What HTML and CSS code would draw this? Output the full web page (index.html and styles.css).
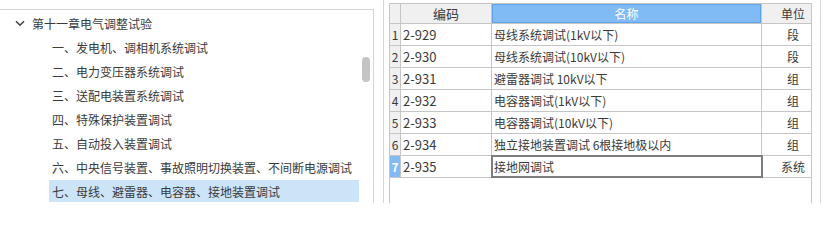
FILE: index.html
```html
<!DOCTYPE html>
<html lang="zh-CN">
<head>
<meta charset="utf-8">
<link rel="stylesheet" href="styles.css">
</head>
<body>
<div class="page">
  <div class="tree-panel">
    <div class="tree">
      <div class="node chapter">
        <svg class="chev" width="10" height="7" viewBox="0 0 10 7"><path d="M1 1.2 L5 5.2 L9 1.2" fill="none" stroke="#444" stroke-width="1.6"/></svg>
        <span>第十一章电气调整试验</span>
      </div>
      <div class="node child"><span class="label">一、发电机、调相机系统调试</span></div>
      <div class="node child"><span class="label">二、电力变压器系统调试</span></div>
      <div class="node child"><span class="label">三、送配电装置系统调试</span></div>
      <div class="node child"><span class="label">四、特殊保护装置调试</span></div>
      <div class="node child"><span class="label">五、自动投入装置调试</span></div>
      <div class="node child"><span class="label">六、中央信号装置、事故照明切换装置、不间断电源调试</span></div>
      <div class="node child"><span class="label selected">七、母线、避雷器、电容器、接地装置调试</span></div>
    </div>
    <div class="scrolltrack"><div class="thumb"></div></div>
  </div>
  <div class="splitter"></div>
  <div class="grid">
    <div class="row head">
      <div class="cell num"></div>
      <div class="cell code c">编码</div>
      <div class="cell name c active-head">名称</div>
      <div class="cell unit">单位</div>
    </div>
    <div class="row"><div class="cell num">1</div><div class="cell code">2-929</div><div class="cell name">母线系统调试(1kV以下)</div><div class="cell unit">段</div></div>
    <div class="row"><div class="cell num">2</div><div class="cell code">2-930</div><div class="cell name">母线系统调试(10kV以下)</div><div class="cell unit">段</div></div>
    <div class="row"><div class="cell num">3</div><div class="cell code">2-931</div><div class="cell name">避雷器调试 10kV以下</div><div class="cell unit">组</div></div>
    <div class="row"><div class="cell num">4</div><div class="cell code">2-932</div><div class="cell name">电容器调试(1kV以下)</div><div class="cell unit">组</div></div>
    <div class="row"><div class="cell num">5</div><div class="cell code">2-933</div><div class="cell name">电容器调试(10kV以下)</div><div class="cell unit">组</div></div>
    <div class="row"><div class="cell num">6</div><div class="cell code">2-934</div><div class="cell name">独立接地装置调试 6根接地极以内</div><div class="cell unit">组</div></div>
    <div class="row"><div class="cell num active-num">7</div><div class="cell code">2-935</div><div class="cell name focus">接地网调试</div><div class="cell unit">系统</div></div>
  </div>
  <div class="edge"></div>
</div>
</body>
</html>
```

FILE: styles.css
```css
* { box-sizing: border-box; }
html, body { margin: 0; padding: 0; background: #fff; overflow: hidden; }
body {
  width: 823px;
  height: 203px;
  font-family: "Noto Sans CJK SC", "Microsoft YaHei", sans-serif;
  font-size: 12px;
  color: #3a3a3a;
}
.page {
  display: flex;
  height: 203px;
  overflow: hidden;
}
.tree-panel {
  width: 374px;
  margin-top: 9px;
  border-top: 1px solid #d6d6d6;
  border-right: 1px solid #d6d6d6;
  display: flex;
  height: 194px;
}
.tree {
  width: 360px;
  padding-top: 1px;
}
.node {
  height: 24px;
  display: flex;
  align-items: center;
  white-space: nowrap;
}
.chapter { padding-left: 15px; }
.chev { margin-right: 7px; }
.child { padding-left: 49px; }
.label {
  display: flex;
  align-items: center;
  height: 22px;
  padding-left: 3px;
  flex: 1;
  margin-right: 1px;
}
.label.selected { background: #cce4f8; }
.scrolltrack {
  flex: 1;
  padding-left: 2px;
  padding-top: 47px;
}
.thumb {
  width: 8px;
  height: 25px;
  border-radius: 4px;
  background: #c4c4c4;
}
.splitter {
  width: 1px;
  margin-left: 9px;
  background: #d6d6d6;
}
.grid {
  width: 423px;
  margin-left: 5px;
  margin-top: 3px;
  border: 1px solid #c6c6c6;
  border-bottom: none;
  height: 200px;
  background: #fff;
}
.row {
  display: flex;
  height: 22px;
  border-bottom: 1px solid #c6c6c6;
}
.row.head {
  height: 20px;
  background: #f0f0f0;
}
.cell {
  border-right: 1px solid #c6c6c6;
  display: flex;
  align-items: center;
  white-space: nowrap;
  padding-left: 2px;
  line-height: 1;
}
.cell.num {
  width: 11px;
  padding-left: 0;
  justify-content: center;
  background: #f0f0f0;
  font-size: 12px;
}
.cell.code { width: 91px; font-size: 13px; }
.cell.name { width: 270px; }
.cell.unit {
  width: 49px;
  border-right: none;
  justify-content: center;
  padding-left: 13px;
}
.cell.c { justify-content: center; padding-left: 0; }
.cell.active-head {
  background: #80bbf6;
  color: #fff;
  box-shadow: inset 0 0 0 1px #5fa4ea;
}
.cell.active-num {
  background: #80bbf6;
  color: #fff;
  font-weight: bold;
}
.cell.focus {
  outline: 2px solid #7d7d7d;
  outline-offset: -1px;
}
.edge {
  width: 1px;
  margin-left: 8px;
  background: #d6d6d6;
}
```
